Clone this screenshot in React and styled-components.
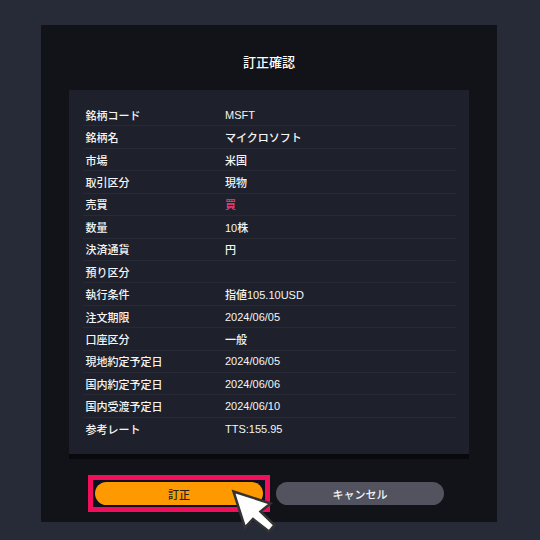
import React from "react"
import styled, { createGlobalStyle } from "styled-components"

const rows = [
  ["銘柄コード", "MSFT"],
  ["銘柄名", "マイクロソフト"],
  ["市場", "米国"],
  ["取引区分", "現物"],
  ["売買", "買", true],
  ["数量", "10株"],
  ["決済通貨", "円"],
  ["預り区分", ""],
  ["執行条件", "指値105.10USD"],
  ["注文期限", "2024/06/05"],
  ["口座区分", "一般"],
  ["現地約定予定日", "2024/06/05"],
  ["国内約定予定日", "2024/06/06"],
  ["国内受渡予定日", "2024/06/10"],
  ["参考レート", "TTS:155.95"],
]

const App = () => (
  <Page>
    <GlobalStyle />
    <Modal>
      <Title>訂正確認</Title>
      <Card>
        {rows.map(([label, value, buy]) => (
          <Row key={label}>
            <Label>{label}</Label>
            <Value $buy={buy}>{value}</Value>
          </Row>
        ))}
      </Card>
      <Buttons>
        <Highlight>
          <Button $primary>訂正</Button>
        </Highlight>
        <Button>キャンセル</Button>
      </Buttons>
      <Cursor viewBox="0 0 46 50" aria-hidden="true">
        <path
          d="M2.5 4.5 L14 40.5 L22 32 L38 44.5 L43.5 38 L29.5 24.5 L39.5 16.5 Z"
          fill="#fff"
          stroke="#333"
          strokeWidth="2.5"
          strokeLinejoin="miter"
        />
      </Cursor>
    </Modal>
  </Page>
)

const GlobalStyle = createGlobalStyle`
  body {
    margin: 0;
    background: #272b38;
    font-family: "Liberation Sans", "Noto Sans CJK JP", sans-serif;
    font-weight: 500;
  }
`
const Page = styled.div`
  width: 540px;
  height: 540px;
  padding: 25px 43px 18px 41px;
  box-sizing: border-box;
  overflow: hidden;
`
const Modal = styled.div`
  position: relative;
  height: 497px;
  background: #111318;
  padding: 0 28px;
  box-sizing: border-box;
`
const Title = styled.div`
  height: 65px;
  line-height: 75px;
  text-align: center;
  font-size: 13px;
  color: #fff;
`
const Card = styled.div`
  height: 364px;
  padding: 14px 13px 0 14px;
  box-sizing: border-box;
  background: #1e212b;
  box-shadow: 0 5px 0 #08090c;
`
const Row = styled.div`
  display: flex;
  align-items: center;
  height: 22.43px;
  box-sizing: border-box;
  padding-left: 2.5px;
  border-bottom: 1px solid #272a35;
  font-size: 11px;
  color: #f5f5f5;

  &:last-child {
    border-bottom: 0;
  }
`
const Label = styled.div`
  width: 139.5px;
`
const Value = styled.div`
  color: ${(p) => (p.$buy ? "#ee3a76" : "#f5f5f5")};
`
const Buttons = styled.div`
  display: flex;
  align-items: center;
  gap: 6px;
  margin: 21px 0 0 19px;
`
const Highlight = styled.div`
  padding: 2px;
  border: 5px solid #f10f5c;
  background: #0d1020;
`
const Button = styled.div`
  width: 168px;
  height: 23px;
  border-radius: 12px;
  display: flex;
  align-items: center;
  justify-content: center;
  font-size: 11px;
  background: ${(p) => (p.$primary ? "#ff9900" : "#52535f")};
  color: ${(p) => (p.$primary ? "#222" : "#f5f5f5")};
`
const Cursor = styled.svg`
  position: absolute;
  left: 190px;
  top: 462px;
  width: 46px;
  height: 50px;
`

export default App
